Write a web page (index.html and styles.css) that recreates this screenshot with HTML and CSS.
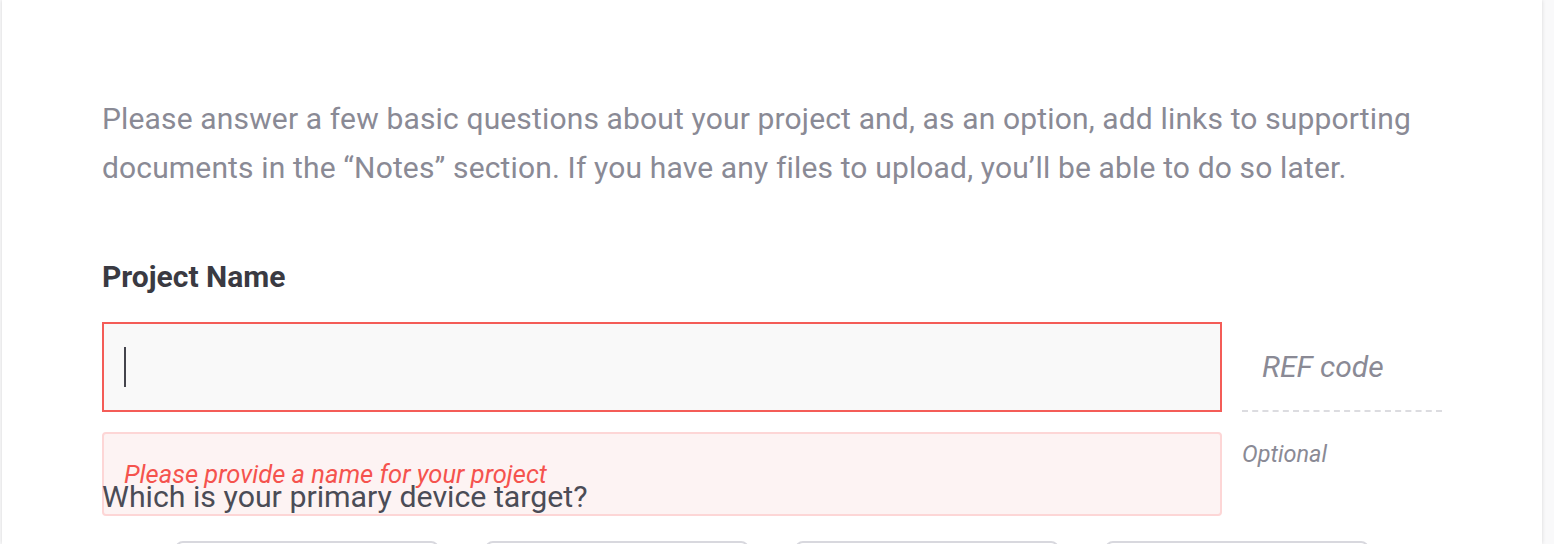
FILE: index.html
```html
<!DOCTYPE html>
<html lang="en">
<head>
<meta charset="utf-8">
<title>Project details</title>
<link rel="stylesheet" href="styles.css">
</head>
<body>
<main class="panel">
  <p class="intro">Please answer a few basic questions about your project and, as an option, add links to supporting documents in the “Notes” section. If you have any files to upload, you’ll be able to do so later.</p>

  <div class="label">Project Name</div>

  <div class="field-row">
    <div class="field">
      <div class="input"><span class="caret"></span></div>
      <div class="error">Please provide a name for your project</div>
    </div>
    <div class="ref">
      <div class="ref-input">REF code</div>
      <div class="optional">Optional</div>
    </div>
  </div>

  <h2 class="question">Which is your primary device target?</h2>

  <div class="cards">
    <div class="card"></div>
    <div class="card"></div>
    <div class="card"></div>
    <div class="card"></div>
  </div>
</main>
</body>
</html>
```

FILE: styles.css
```css
html, body {
  margin: 0;
  padding: 0;
  height: 100%;
  overflow: hidden;
}

body {
  background: #f9f9fa;
  font-family: Roboto, "Noto Sans", sans-serif;
}

.panel {
  box-sizing: border-box;
  width: 1540px;
  height: 544px;
  overflow: hidden;
  margin-left: 2px;
  padding: 94px 100px 0 100px;
  background: #ffffff;
  box-shadow: 0 0 4px rgba(0, 0, 0, 0.14);
}

.intro {
  margin: 0;
  width: 1340px;
  font-size: 30px;
  line-height: 49px;
  letter-spacing: 0.15px;
  color: #8a8a95;
}

.label {
  margin-top: 68px;
  font-size: 30px;
  line-height: 34px;
  font-weight: 700;
  color: #3a3a42;
}

.field-row {
  display: flex;
  gap: 20px;
  margin-top: 28px;
  width: 1340px;
}

.field {
  position: relative;
  width: 1120px;
}

.input {
  box-sizing: border-box;
  height: 90px;
  border: 2px solid #f45c57;
  background: #f9f9f9;
  display: flex;
  align-items: center;
  padding-left: 20px;
}

.caret {
  display: block;
  width: 2px;
  height: 40px;
  background: #44444c;
}

.error {
  position: absolute;
  left: 0;
  right: 0;
  top: 110px;
  box-sizing: border-box;
  height: 84px;
  padding: 26px 20px 0 20px;
  border: 2px solid #fdd6d6;
  border-radius: 4px;
  background: #fdf3f3;
  font-size: 25.5px;
  line-height: 28px;
  font-style: italic;
  color: #f5534e;
}

.ref {
  width: 200px;
}

.ref-input {
  box-sizing: border-box;
  height: 90px;
  padding: 29px 0 0 20px;
  border-bottom: 2px dashed #dcdce0;
  font-size: 30px;
  line-height: 32px;
  font-style: italic;
  color: #8a8a95;
}

.optional {
  margin-top: 29px;
  font-size: 23.5px;
  line-height: 27px;
  font-style: italic;
  color: #8a8a95;
}

.question {
  position: relative;
  margin: 11px 0 0 0;
  font-size: 30.3px;
  line-height: 36px;
  font-weight: 400;
  color: #4b4c56;
}

.cards {
  display: flex;
  justify-content: center;
  gap: 46px;
  width: 1340px;
  margin-top: 26px;
}

.card {
  box-sizing: border-box;
  width: 264px;
  height: 120px;
  border: 2px solid #d8d8de;
  border-radius: 8px;
  background: #ffffff;
}
```
